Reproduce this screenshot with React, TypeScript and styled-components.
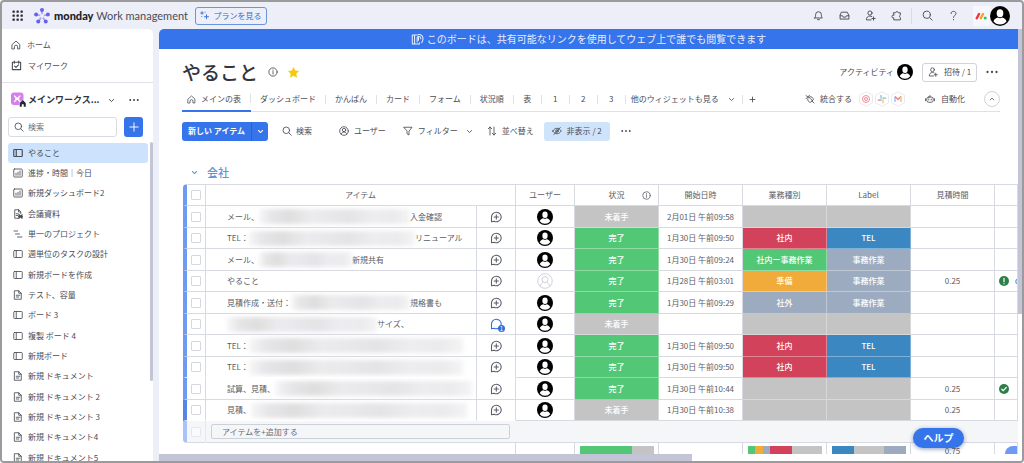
import React from "react";
import styled, { createGlobalStyle, css } from "styled-components";

const GlobalStyle = createGlobalStyle`
  *, *::before, *::after { box-sizing: border-box; }
  body { margin: 0; background: #fff; }
  body, button, input {
    font-family: "Noto Sans CJK JP", sans-serif;
    font-size: 8px;
    line-height: 12px;
    color: #4a4c55;
  }
  button { border: 0; background: none; padding: 0; cursor: pointer; white-space: nowrap; }
  a { color: inherit; text-decoration: none; white-space: nowrap; }
  svg { display: block; flex: none; }
`;

const colors = {
  blue: "#3574ea",
  bar: "#6d9af3",
  line: "#d8dae2",
  scroll: "#c3c5d6",
  chrome: "#eceef8",
  green: "#52c876",
  gray: "#c4c4c4",
  red: "#d2435b",
  orange: "#f1ab3b",
  slate: "#9cabbf",
  sky: "#3a87c2",
};

/* ---------- icons ---------- */

const shapes: Record<string, React.ReactNode> = {
  home: <path d="M2.500 8.800 10 2.200l7.500 6.600v9h-4.300v-4.300a3.200 3.200 0 0 0-6.400 0v4.300H2.500z" />,
  calendar: <><path d="M2.500 4h15v13.500h-15zM6 1.800v4M14 1.800v4" /><path d="m6.500 11 2.600 2.400 4.600-4.600" /></>,
  search: <><circle cx="8.600" cy="8.600" r="6.600" /><path d="m13.500 13.500 5 5" /></>,
  plus: <path d="M10 3v14M3 10h14" />,
  down: <path d="m4 7 6 6 6-6" />,
  up: <path d="m4 13 6-6 6 6" />,
  board: <><rect x="1.500" y="3" width="17" height="14" rx="1.500" /><path d="M6.500 3v14" /></>,
  chart: <><rect x="1.500" y="2" width="17" height="16" rx="1.500" /><path d="M6 14.500v-4M10 14.500v-6M14 14.500V6" /></>,
  doc: <><path d="M3.500 1.500h8l5 5v12h-13zM11.500 1.500v5h5" /><path d="M6.500 10.500h7M6.500 14h5" /></>,
  docLocked: <><path d="M11 18.500H3.500v-17h8l4 4V9M11 1.500V6h4" /><path d="M6.500 9.500h4M6.500 13h3" /><path d="M12 11.500 18 18M18 12l-6 6M11.500 15h7" strokeWidth="3" /></>,
  gantt: <path d="M2 4h7M5 10h8M9 16h9" />,
  info: <><circle cx="10" cy="10" r="8.300" /><path d="M10 9v5M10 5.800v.8" /></>,
  bell: <path d="M3 14.500h14c-1.300-1.200-1.700-2.800-1.700-6a5.300 5.300 0 0 0-10.600 0c0 3.200-.4 4.800-1.700 6zM8.300 17.500h3.400" />,
  inbox: <path d="M5 4h10l3 6v6.500H2V10zM2 10.500h4.500l1.200 2.500h4.600l1.200-2.500H18" />,
  invite: <><circle cx="9" cy="5.500" r="3.800" /><path d="M11 18H2.500c0-4.500 2.500-7 6.500-7 1.300 0 2.400.3 3.300.8" /><path d="M15.500 12.500v6M12.500 15.500h6" /></>,
  puzzle: <path d="M5 5h3.200a2.600 2.600 0 0 1 5.100 0H17v4.200a2.500 2.500 0 0 0 0 4.600V18H5v-3.800a2.600 2.600 0 1 1 0-5z" />,
  question: <path d="M5.500 6.500c0-2.600 1.900-4 4.500-4s4.500 1.500 4.500 3.900c0 3.100-4.500 3.300-4.500 7M10 17v.8" />,
  person: <><circle cx="10" cy="10" r="8.600" /><circle cx="10" cy="8" r="3.400" /><path d="M4.500 16.300c.8-2.800 2.800-4.300 5.500-4.300s4.700 1.500 5.500 4.300" /></>,
  filter: <path d="M2 2.500h16l-6 8V18l-4-2.500v-5z" />,
  sort: <path d="M6 18V2M2.500 5.500 6 2l3.500 3.500M14 2v16M10.500 14.500 14 18l3.500-3.500" />,
  hidden: <><path d="M1.500 10C4 6.300 7 4.500 10 4.500s6 1.800 8.500 5.500c-2.500 3.700-5.500 5.500-8.500 5.500S4 13.700 1.500 10z" /><circle cx="10" cy="10" r="2.600" /><path d="M4 17 16.500 3" /></>,
  plug: <path d="m2 3 5 4M2 9.500 9 2.500M7 5.500l8 8M5.500 9.500a5.500 5.500 0 0 0 6 7l5-5a5.500 5.500 0 0 0-7-6M14 14l4 4" />,
  robot: <><rect x="3.500" y="6" width="13" height="10.500" rx="4" /><path d="M1 9.500v4M19 9.500v4M10 6V3M7.500 10v2M12.500 10v2" /></>,
  chat: <><path d="M10.500 2a8 8 0 1 1-3.600 15.100L2.500 18V10a8 8 0 0 1 8-8z" /><path d="M10.500 6.500v7M7 10h7" /></>,
  chatOpen: <path d="M10.500 2a8 8 0 1 1-3.600 15.100L2.500 18V10a8 8 0 0 1 8-8z" />,
  share: <><path d="M10 3H2v14h11v-2M5.500 3v14" /><path d="M9.500 14V7.500c0-1.500 2-1.500 2 0V11M11 5.500c2.500-.6 4 1 4 3.500M11.500 2.500c4.500-.5 7 2.500 7 6.500 0 3-1.500 4.500-2 6" /></>,
};

const Icon = ({ name, size = 10, w = 1.7, color = "currentColor" }: { name: string; size?: number; w?: number; color?: string }) => (
  <svg width={size} height={size} viewBox="0 0 20 20" fill="none" stroke={color} strokeWidth={w} strokeLinecap="round" strokeLinejoin="round" aria-hidden="true">
    {shapes[name]}
  </svg>
);

const Dots = ({ size = 10 }: { size?: number }) => (
  <svg width={size} height={size} viewBox="0 0 20 20" fill="currentColor" aria-hidden="true">
    <circle cx="2.500" cy="10" r="1.900" /><circle cx="10" cy="10" r="1.900" /><circle cx="17.500" cy="10" r="1.900" />
  </svg>
);

const Avatar = ({ size = 16 }: { size?: number }) => (
  <svg width={size} height={size} viewBox="0 0 32 32" aria-hidden="true">
    <circle cx="16" cy="16" r="16" fill="#000" />
    <path d="M5.500 24.500c1.300-3.800 4-5.500 7.200-6.200 2 1.700 4.600 1.700 6.600 0 3.200.7 5.900 2.400 7.200 6.200A13.500 13.500 0 0 1 16 29.600a13.500 13.500 0 0 1-10.500-5.100z" fill="#fff" />
    <ellipse cx="16" cy="11.500" rx="5.300" ry="6.500" fill="#fff" />
  </svg>
);

const EmptyAvatar = () => (
  <svg width="16" height="16" viewBox="0 0 32 32" fill="none" stroke="#d0d2da" strokeWidth="2" aria-hidden="true">
    <circle cx="16" cy="16" r="14.500" />
    <circle cx="16" cy="13" r="6" />
    <path d="M6.500 26c1-4 3.500-6 6-7M25.500 26c-1-4-3.500-6-6-7" />
  </svg>
);

const AppGrid = () => (
  <svg width="11" height="11" viewBox="0 0 11 11" fill="#26282f" aria-hidden="true">
    {[1, 5, 9].map((y) => [1, 5, 9].map((x) => <rect key={`${x}-${y}`} x={x - 0.500} y={y - 0.500} width="2.300" height="2.300" rx="0.600" />))}
  </svg>
);

const WorkLogo = () => (
  <svg width="16" height="16" viewBox="0 0 32 32" aria-hidden="true">
    <g stroke="#a9a4f5" strokeWidth="3.500">
      <path d="M16 16V4M16 16 4 13M16 16l12-3M16 16 9 27M16 16l7 11" />
    </g>
    <circle cx="16" cy="16" r="4" fill="#eceef8" />
    <g fill="#6a5ff0">
      <circle cx="16" cy="4.200" r="4" /><circle cx="4.200" cy="13" r="4" /><circle cx="27.800" cy="13" r="4" />
      <circle cx="8.500" cy="27" r="4" /><circle cx="23.500" cy="27" r="4" />
    </g>
  </svg>
);

const MondayMark = () => (
  <svg width="12" height="8" viewBox="0 0 24 16" aria-hidden="true">
    <g strokeWidth="5" strokeLinecap="round">
      <path d="M3.500 12.500 8 4" stroke="#f0334f" /><path d="M11.500 12.500 16 4" stroke="#f8a51b" />
    </g>
    <circle cx="20.500" cy="12" r="3" fill="#1fc875" />
  </svg>
);

const Sparkle = () => (
  <svg width="9" height="9" viewBox="0 0 18 18" stroke="#3f74d0" strokeWidth="2" strokeLinecap="round" aria-hidden="true">
    <path d="M4 1.500v5M1.500 4h5M13 7.500v8M9 11.500h8M10 2.500h.1M3.500 11h.1" />
  </svg>
);

const WorkspaceBadge = () => (
  <svg width="16" height="16" viewBox="0 0 32 32" aria-hidden="true">
    <rect x="0" y="1" width="25" height="25" rx="6" fill="#d57fe8" />
    <path d="m7 8 11 11M18 8 7 19M9 13.500h7" stroke="#fff" strokeWidth="2.500" strokeLinecap="round" />
    <path d="M17 30v-8l6.500-6.500L30 22v8h-5v-5h-3v5z" fill="#26282f" stroke="#fff" strokeWidth="1" />
  </svg>
);

const Star = () => (
  <svg width="11" height="11" viewBox="0 0 20 20" aria-hidden="true">
    <path d="m10 1 2.800 5.900 6.400.8-4.700 4.500 1.200 6.400L10 15.500l-5.700 3.100 1.200-6.400L.8 7.700l6.400-.8z" fill="#f8c80a" stroke="#f8c80a" strokeLinejoin="round" />
  </svg>
);

const Hexagon = ({ children }: { children: React.ReactNode }) => (
  <svg width="16" height="16" viewBox="0 0 32 32" fill="none" aria-hidden="true">
    <path d="M16 1.500 29 8.500v15L16 30.500 3 23.500v-15z" fill="#fff" stroke="#e3e5ea" strokeWidth="1.600" strokeLinejoin="round" />
    {children}
  </svg>
);

/* ---------- frame and top bar ---------- */

const Frame = styled.div`
  height: 100vh;
  display: flex;
  flex-direction: column;
  overflow: hidden;
  background: ${colors.chrome};
  border: 2px solid #9b9b9d;
  border-radius: 4px;
`;

const TopBar = styled.header`
  flex: none;
  height: 27px;
  display: flex;
  align-items: center;
  justify-content: space-between;
  padding: 0 12px 0 9px;
`;

const Brand = styled.div`
  display: flex;
  align-items: center;
`;

const BrandLink = styled.a`
  display: flex;
  align-items: center;
  gap: 4px;
  margin: 0 7px 0 11px;
  font: 400 11px/16px Lato, sans-serif;
  color: #4a4c55;
  b { font-weight: 900; color: #202228; }
`;

const PlanButton = styled.button`
  display: flex;
  align-items: center;
  justify-content: center;
  gap: 4px;
  width: 72px;
  height: 18px;
  border: 1px solid #6d94da;
  border-radius: 3px;
  color: #3f6fc4;
`;

const TopActions = styled.nav`
  display: flex;
  align-items: center;
  gap: 14px;
`;

const IconButton = styled.button`
  display: flex;
  align-items: center;
  justify-content: center;
  width: 12px;
  height: 12px;
`;

const TopDivider = styled.span`
  width: 1px;
  height: 16px;
  margin: 0 -5px;
  background: #d9dce8;
`;

const Account = styled.button`
  display: flex;
  align-items: center;
  gap: 3px;
  padding-left: 2px;
  background: linear-gradient(90deg, #f6f7fc 18px, transparent 18px);
`;

/* ---------- sidebar ---------- */

const Body = styled.div`
  flex: 1;
  min-height: 0;
  display: flex;
  gap: 6px;
`;

const Sidebar = styled.aside`
  flex: none;
  width: 151px;
  display: flex;
  flex-direction: column;
  background: #fff;
  border-top-right-radius: 5px;
`;

const MainLinks = styled.nav`
  height: 54px;
  padding: 5px 9px;
  border-bottom: 1px solid #dfe1e8;
`;

const MainLink = styled.a`
  display: flex;
  align-items: center;
  gap: 6px;
  height: 21px;
`;

const Workspace = styled.div`
  display: flex;
  align-items: center;
  gap: 1px;
  height: 34px;
  padding: 0 14px 0 9px;
  font-weight: 700;
  font-size: 9px;
  color: #33353c;
`;

const WorkspaceName = styled.span`
  flex: 1;
  white-space: nowrap;
`;

const WorkspaceActions = styled.span`
  display: flex;
  align-items: center;
  gap: 14px;
`;

const SearchRow = styled.div`
  display: flex;
  gap: 7px;
  padding: 0 10px 5px 6px;
`;

const SearchBox = styled.label`
  flex: 1;
  min-width: 0;
  display: flex;
  align-items: center;
  gap: 4px;
  height: 20px;
  padding: 0 5px;
  border: 1px solid #dadce4;
  border-radius: 3px;
`;

const SearchInput = styled.input`
  flex: 1;
  min-width: 0;
  border: 0;
  padding: 0;
  background: none;
  &::placeholder { color: #6d707a; opacity: 1; }
`;

const AddButton = styled.button`
  flex: none;
  display: flex;
  align-items: center;
  justify-content: center;
  width: 19px;
  height: 20px;
  border-radius: 3px;
  background: ${colors.blue};
  color: #fff;
`;

const BoardArea = styled.div`
  flex: 1;
  min-height: 0;
  display: flex;
`;

const BoardList = styled.ul`
  flex: 1;
  margin: 0;
  padding: 1px 2px 0 6px;
  list-style: none;
  overflow: hidden;
`;

const BoardItem = styled.li`
  height: 20px;
  &:nth-child(3n) { height: 21px; }
`;

const BoardLink = styled.a<{ $active?: boolean }>`
  display: flex;
  align-items: center;
  gap: 5px;
  height: 20px;
  padding-left: 5px;
  border-radius: 3px;
  background: ${(p) => (p.$active ? "#cde3fd" : "transparent")};
`;

const SideThumb = styled.div`
  width: 3px;
  height: 75%;
  border-radius: 2px;
  background: ${colors.scroll};
`;

/* ---------- board ---------- */

const Main = styled.main`
  position: relative;
  flex: 1;
  min-width: 0;
  display: flex;
`;

const Panel = styled.div`
  flex: 1;
  min-width: 0;
  display: flex;
  flex-direction: column;
  overflow: hidden;
  background: #fff;
  border-top-left-radius: 5px;
`;

const MainThumb = styled.div`
  height: 66%;
  background: ${colors.scroll};
`;

const ThumbTrack = styled.div`
  flex: none;
  width: 4px;
  background: #fff;
`;

const BottomTrack = styled.div`
  flex: none;
  height: 7px;
  background: #fff;
`;

const BottomThumb = styled.div`
  width: 62%;
  height: 7px;
  background: ${colors.scroll};
`;

const Banner = styled.div`
  flex: none;
  display: flex;
  align-items: center;
  justify-content: center;
  gap: 3px;
  height: 20px;
  background: ${colors.blue};
  color: #e6eeff;
  font-size: 10px;
`;

const Content = styled.div`
  flex: 1;
  min-height: 0;
  padding-left: 23px;
  overflow: hidden;
`;

const TitleRow = styled.div`
  display: flex;
  align-items: center;
  justify-content: space-between;
  height: 38px;
  padding: 8px 20px 0 0;
`;

const Cluster = styled.div<{ $gap: number }>`
  display: flex;
  align-items: center;
  gap: ${(p) => p.$gap}px;
`;

const Title = styled.h1`
  margin: 0;
  font-size: 19px;
  line-height: 28px;
  font-weight: 500;
  color: #33353c;
`;

const InviteButton = styled.button`
  display: flex;
  align-items: center;
  justify-content: center;
  gap: 6px;
  width: 55px;
  height: 19px;
  border: 1px solid #d0d3dc;
  border-radius: 3px;
`;

const TabRow = styled.div`
  display: flex;
  align-items: center;
  justify-content: space-between;
  height: 25px;
  margin-right: 18px;
  border-bottom: 1px solid #dfe1e8;
`;

const Tabs = styled.nav`
  display: flex;
  height: 25px;
`;

const Tab = styled.a<{ $active?: boolean }>`
  display: flex;
  align-items: center;
  justify-content: center;
  gap: 5px;
  min-width: 28px;
  padding: 0 10px 0 9px;
  background: linear-gradient(#dfe1e8, #dfe1e8) right center / 1px 9px no-repeat;
  ${(p) => p.$active && css`
    padding: 2px 10px 0 5px;
    border-bottom: 2px solid ${colors.blue};
  `}
`;

const MoreTab = styled.button`
  display: flex;
  align-items: center;
  gap: 9px;
  padding: 0 8px 0 5px;
  background: linear-gradient(#dfe1e8, #dfe1e8) right center / 1px 9px no-repeat;
`;

const AddTab = styled.button`
  padding: 0 6px;
`;

const TextButton = styled.button<{ $gap?: number }>`
  display: flex;
  align-items: center;
  gap: ${(p) => p.$gap ?? 5}px;
`;

const RoundButton = styled.button`
  display: flex;
  align-items: center;
  justify-content: center;
  width: 16px;
  height: 16px;
  border: 1px solid #d0d3dc;
  border-radius: 50%;
`;

const Toolbar = styled.div`
  display: flex;
  align-items: center;
  gap: 14px;
  height: 38px;
`;

const SplitButton = styled.div`
  display: flex;
  width: 86px;
  height: 19px;
  border-radius: 3px;
  overflow: hidden;
  background: ${colors.blue};
`;

const NewItem = styled.button`
  flex: 1;
  color: #fff;
  font-weight: 700;
`;

const NewItemMenu = styled.button`
  display: flex;
  align-items: center;
  justify-content: center;
  width: 17px;
  border-left: 1px solid #2c62c8;
  color: #fff;
`;

const HiddenButton = styled.button`
  display: flex;
  align-items: center;
  justify-content: center;
  gap: 5px;
  width: 66px;
  height: 19px;
  margin: 0 -4px;
  border-radius: 3px;
  background: #cfe3fb;
`;

const GroupTitle = styled.h2`
  display: flex;
  align-items: center;
  gap: 9px;
  height: 24px;
  margin: 10px 0 0 9px;
  font-size: 11px;
  line-height: 16px;
  font-weight: 500;
  color: #5f93da;
`;

/* ---------- table ---------- */

const Table = styled.table`
  width: calc(100% - 1px);
  margin-left: 1px;
  table-layout: fixed;
  border-collapse: separate;
  border-spacing: 0;
  color: #5a5c65;
`;

const HeadCell = styled.th`
  height: 22px;
  padding: 0;
  font-weight: 400;
  text-align: center;
  white-space: nowrap;
  overflow: hidden;
  border: solid ${colors.line};
  border-width: 1px 1px 1px 0;
`;

const InfoLabel = styled.span`
  display: grid;
  grid-template-columns: 1fr auto 1fr;
  align-items: center;
  padding: 0 7px;
  svg { justify-self: end; }
`;

const Row = styled.tr`
  td { height: 22px; }
  &:nth-child(even) td { height: 21px; }
`;

const Cell = styled.td<{ $open?: boolean }>`
  padding: 0;
  text-align: center;
  white-space: nowrap;
  overflow: hidden;
  border: solid ${colors.line};
  border-width: 0 1px 1px 0;
  ${(p) => p.$open && css`border-bottom-color: transparent;`}
  > svg { margin: 0 auto; }
`;

const checkEdge = css<{ $bar?: string }>`
  border-left: 4px solid ${(p) => p.$bar ?? colors.bar};
`;

const CheckHead = styled(HeadCell)<{ $bar?: string }>`
  ${checkEdge}
  border-top-left-radius: 4px;
`;

const CheckCell = styled(Cell)<{ $bar?: string }>`
  ${checkEdge}
`;

const Check = styled.input.attrs({ type: "checkbox" })`
  appearance: none;
  display: block;
  width: 10px;
  height: 10px;
  margin: 0 auto;
  border: 1px solid #d5d8e0;
  border-radius: 1px;
  background: #fff;
`;

const ItemLine = styled.div`
  display: flex;
  align-items: center;
  padding-left: 21px;
`;

const HiddenSpan = styled.span<{ $width: number }>`
  display: flex;
  align-items: center;
  width: ${(p) => p.$width}px;
  flex: none;
`;

const Redaction = styled.span`
  flex: 1;
  height: 15px;
  filter: blur(2px);
  background: linear-gradient(90deg, #f6f6f7, #e6e6e9 8%, #dededf 20%, #ebebed 34%, #e9e9ec 45%, #e4e4e7 60%, #ededef 75%, #ebebed 90%, #f4f4f5);
`;

const ChatButton = styled.button`
  position: relative;
  display: block;
  margin: 0 auto;
  color: #5c5f69;
`;

const Count = styled.span`
  position: absolute;
  right: -3px;
  bottom: -2px;
  width: 7px;
  height: 7px;
  border-radius: 50%;
  background: #2f6fdc;
  color: #fff;
  font-size: 6px;
  line-height: 7px;
  text-align: center;
`;

const LabelCell = styled(Cell)<{ $tone: string }>`
  background: ${(p) => p.$tone};
  border-color: rgba(255, 255, 255, 0.35);
  color: #fff;
  font-weight: 500;
`;

const Mark = styled.div`
  display: flex;
  align-items: center;
  gap: 6px;
  padding-left: 4px;
`;

const AddCell = styled.td<{ $bar?: string }>`
  height: 22px;
  padding: 0;
  background: #f5f6f8;
  border-bottom: 1px solid ${colors.line};
  ${(p) => p.$bar && css`
    border-left: 4px solid ${p.$bar};
    border-right: 1px solid #e6e8ed;
    border-bottom-left-radius: 4px;
    ${Check} { border-color: #e6e8ed; background: #f8fafc; }
  `}
`;

const AddInput = styled.input`
  display: block;
  width: calc(100% - 11px);
  height: 15px;
  margin-left: 5px;
  padding: 0 10px;
  border: 1px solid #ccd0d9;
  border-radius: 2px;
  background: transparent;
  &::placeholder { color: #6b6e78; opacity: 1; }
`;

const SummaryCell = styled.td`
  height: 18px;
  padding: 3px 4px 0;
  vertical-align: top;
  text-align: center;
  line-height: 9px;
  border-right: 1px solid ${colors.line};
  &:first-child { border-right: 0; }
`;

const Battery = styled.div`
  display: flex;
  height: 14px;
  margin-left: 1px;
`;

const Segment = styled.span<{ $tone: string; $share: number }>`
  flex: ${(p) => p.$share} 0 0;
  background: ${(p) => p.$tone};
`;

const SummaryTab = styled.div`
  height: 14px;
  margin: 0 -4px 0 6px;
  border-top-left-radius: 8px;
  background: ${colors.bar};
`;

const HelpButton = styled.button`
  position: absolute;
  right: 58px;
  bottom: 13px;
  width: 51px;
  height: 20px;
  border-radius: 10px;
  background: ${colors.blue};
  box-shadow: 0 1px 4px rgba(30, 60, 130, 0.5);
  color: #fff;
  font-size: 10px;
  font-weight: 700;
`;

/* ---------- data ---------- */

const boards: [string, string][] = [
  ["board", "やること"],
  ["chart", "進捗・時間｜今日"],
  ["chart", "新規ダッシュボード2"],
  ["docLocked", "会議資料"],
  ["gantt", "単一のプロジェクト"],
  ["board", "週単位のタスクの設計"],
  ["board", "新規ボードを作成"],
  ["doc", "テスト、容量"],
  ["board", "ボード 3"],
  ["board", "複製 ボード 4"],
  ["board", "新規ボード"],
  ["doc", "新規 ドキュメント"],
  ["doc", "新規 ドキュメント 2"],
  ["doc", "新規 ドキュメント 3"],
  ["doc", "新規 ドキュメント4"],
  ["doc", "新規 ドキュメント5"],
];

const tabs = ["ダッシュボード", "かんばん", "カード", "フォーム", "状況順", "表", "1", "2", "3"];

const tones: Record<string, string> = {
  "完了": colors.green,
  "未着手": colors.gray,
  "社内": colors.red,
  "社内ー事務作業": colors.green,
  "準備": colors.orange,
  "社外": colors.slate,
  "TEL": colors.sky,
  "事務作業": colors.slate,
  "": colors.gray,
};

type Item = {
  lead: string; hide?: number; tail?: string; status: string; date?: string;
  kind: string; label: string; hours?: string; mark?: "alert" | "done"; unread?: boolean; open?: boolean; noUser?: boolean;
};

const items: Item[] = [
  { lead: "メール、", hide: 183, tail: "入金確認", status: "未着手", date: "2月01日 午前09:58", kind: "", label: "" },
  { lead: "TEL：", hide: 188, tail: "リニューアル", status: "完了", date: "1月30日 午前09:50", kind: "社内", label: "TEL" },
  { lead: "メール、", hide: 125, tail: "新規共有", status: "完了", date: "1月30日 午前09:24", kind: "社内ー事務作業", label: "事務作業" },
  { lead: "やること", status: "完了", date: "1月28日 午前03:01", kind: "準備", label: "事務作業", hours: "0.25", mark: "alert", noUser: true },
  { lead: "見積作成・送付：", hide: 183, tail: "規格書も", status: "完了", date: "1月30日 午前09:29", kind: "社外", label: "事務作業" },
  { lead: "", hide: 150, tail: "サイズ、", status: "未着手", kind: "", label: "", unread: true },
  { lead: "TEL：", hide: 236, status: "完了", date: "1月30日 午前09:50", kind: "社内", label: "TEL" },
  { lead: "TEL：", hide: 236, status: "完了", date: "1月30日 午前09:50", kind: "社内", label: "TEL", open: true },
  { lead: "試算、見積、", hide: 245, status: "完了", date: "1月30日 午前10:44", kind: "", label: "", hours: "0.25", mark: "done" },
  { lead: "見積、", hide: 240, status: "未着手", date: "1月30日 午前10:38", kind: "", label: "", hours: "0.25", open: true },
];

const StateMark = ({ kind }: { kind: "alert" | "done" }) => (
  <svg width="10" height="10" viewBox="0 0 20 20" aria-hidden="true">
    <circle cx="10" cy="10" r="10" fill="#2c7f49" />
    <path d={kind === "alert" ? "M10 4.500v7M10 15v.3" : "m5.500 10.500 3 3 6-6.500"} fill="none" stroke="#fff" strokeWidth="2.400" strokeLinecap="round" />
  </svg>
);

const ItemRow = ({ item, bar }: { item: Item; bar?: string }) => (
  <Row>
    <CheckCell $bar={bar} $open={item.open}><Check aria-label={`${item.lead}を選択`} /></CheckCell>
    <Cell $open={item.open}>
      <ItemLine>
        {item.hide ? <HiddenSpan $width={item.hide}>{item.lead}<Redaction /></HiddenSpan> : item.lead}
        {item.tail}
      </ItemLine>
    </Cell>
    <Cell $open={item.open}>
      <ChatButton aria-label="更新">
        <Icon name={item.unread ? "chatOpen" : "chat"} size={12} w={1.8} color={item.unread ? "#2f6fdc" : undefined} />
        {item.unread && <Count>1</Count>}
      </ChatButton>
    </Cell>
    <Cell>{item.noUser ? <EmptyAvatar /> : <Avatar />}</Cell>
    <LabelCell $tone={tones[item.status]}>{item.status}</LabelCell>
    <Cell>{item.date}</Cell>
    <LabelCell $tone={tones[item.kind]}>{item.kind}</LabelCell>
    <LabelCell $tone={tones[item.label]}>{item.label}</LabelCell>
    <Cell>{item.hours}</Cell>
    <Cell>{item.mark && <Mark><StateMark kind={item.mark} />{item.mark === "alert" && "q"}</Mark>}</Cell>
  </Row>
);

const ItemTable = () => (
  <Table>
    <colgroup>
      <col width="23" /><col /><col width="39" /><col width="59" />
      <col width="84" /><col width="84" /><col width="84" />
      <col width="84" /><col width="84" /><col width="23" />
    </colgroup>
    <thead>
      <tr>
        <CheckHead><Check aria-label="すべて選択" /></CheckHead>
        <HeadCell colSpan={2}>アイテム</HeadCell>
        <HeadCell>ユーザー</HeadCell>
        <HeadCell><InfoLabel><i /><span>状況</span><Icon name="info" size={9} /></InfoLabel></HeadCell>
        <HeadCell>開始日時</HeadCell>
        <HeadCell>業務種別</HeadCell>
        <HeadCell>Label</HeadCell>
        <HeadCell>見積時間</HeadCell>
        <HeadCell />
      </tr>
    </thead>
    <tbody>
      {items.map((item, i) => <ItemRow key={i} item={item} bar={i === 9 ? "#5585e6" : undefined} />)}
    </tbody>
    <tfoot>
      <tr>
        <AddCell $bar="#a9c3fa"><Check aria-label="新しい行を選択" disabled /></AddCell>
        <AddCell colSpan={2}><AddInput placeholder="アイテムを+追加する" aria-label="アイテムを追加" /></AddCell>
        <AddCell colSpan={7} />
      </tr>
      <tr>
        <SummaryCell />
        <SummaryCell colSpan={2} />
        <SummaryCell />
        <SummaryCell><Battery><Segment $tone={colors.green} $share={70} /><Segment $tone={colors.gray} $share={30} /></Battery></SummaryCell>
        <SummaryCell />
        <SummaryCell>
          <Battery>
            <Segment $tone={colors.green} $share={10} /><Segment $tone={colors.orange} $share={10} />
            <Segment $tone={colors.slate} $share={10} /><Segment $tone={colors.red} $share={30} />
            <Segment $tone={colors.gray} $share={40} />
          </Battery>
        </SummaryCell>
        <SummaryCell>
          <Battery>
            <Segment $tone={colors.sky} $share={30} /><Segment $tone={colors.gray} $share={40} />
            <Segment $tone={colors.slate} $share={30} />
          </Battery>
        </SummaryCell>
        <SummaryCell>0.75</SummaryCell>
        <SummaryCell><SummaryTab /></SummaryCell>
      </tr>
    </tfoot>
  </Table>
);

export default function App() {
  return (
    <Frame>
      <GlobalStyle />
      <TopBar>
        <Brand>
          <IconButton aria-label="製品メニュー"><AppGrid /></IconButton>
          <BrandLink href="#"><WorkLogo /><span><b>monday</b> Work management</span></BrandLink>
          <PlanButton><Sparkle />プランを見る</PlanButton>
        </Brand>
        <TopActions>
          <IconButton aria-label="通知"><Icon name="bell" size={11} /></IconButton>
          <IconButton aria-label="受信箱"><Icon name="inbox" size={11} /></IconButton>
          <IconButton aria-label="メンバーを招待"><Icon name="invite" size={11} /></IconButton>
          <IconButton aria-label="アプリ"><Icon name="puzzle" size={11} /></IconButton>
          <TopDivider />
          <IconButton aria-label="検索"><Icon name="search" size={11} /></IconButton>
          <IconButton aria-label="ヘルプ"><Icon name="question" size={11} /></IconButton>
          <Account aria-label="アカウント"><MondayMark /><Avatar size={20} /></Account>
        </TopActions>
      </TopBar>
      <Body>
        <Sidebar>
          <MainLinks>
            <MainLink href="#"><Icon name="home" />ホーム</MainLink>
            <MainLink href="#"><Icon name="calendar" size={11} w={2} />マイワーク</MainLink>
          </MainLinks>
          <Workspace>
            <WorkspaceBadge />
            <WorkspaceName>メインワークス...</WorkspaceName>
            <WorkspaceActions><Icon name="down" size={7} w={2.5} /><Dots /></WorkspaceActions>
          </Workspace>
          <SearchRow>
            <SearchBox>
              <Icon name="search" />
              <SearchInput placeholder="検索" aria-label="検索" />
            </SearchBox>
            <AddButton aria-label="追加"><Icon name="plus" size={12} w={1.6} /></AddButton>
          </SearchRow>
          <BoardArea>
            <BoardList>
              {boards.map(([icon, name], i) => (
                <BoardItem key={name}>
                  <BoardLink href="#" $active={i === 0}><Icon name={icon} w={i === 0 ? 2.4 : 1.7} />{name}</BoardLink>
                </BoardItem>
              ))}
            </BoardList>
            <SideThumb />
          </BoardArea>
        </Sidebar>
        <Main>
          <Panel>
            <Banner><Icon name="share" size={13} w={1.6} />このボードは、共有可能なリンクを使用してウェブ上で誰でも閲覧できます</Banner>
            <Content>
              <TitleRow>
                <Cluster $gap={10}>
                  <Title>やること</Title>
                  <Icon name="info" />
                  <Star />
                </Cluster>
                <Cluster $gap={9}>
                  <TextButton $gap={3}>アクティビティ<Avatar /></TextButton>
                  <InviteButton><Icon name="invite" />招待 / 1</InviteButton>
                  <IconButton aria-label="その他"><Dots size={12} /></IconButton>
                </Cluster>
              </TitleRow>
              <TabRow>
                <Tabs>
                  <Tab href="#" $active><Icon name="home" size={9} />メインの表</Tab>
                  {tabs.map((name) => <Tab key={name} href="#">{name}</Tab>)}
                  <MoreTab>他のウィジェットも見る<Icon name="down" size={7} w={2.5} /></MoreTab>
                  <AddTab aria-label="ビューを追加"><Icon name="plus" size={7} w={2.5} /></AddTab>
                </Tabs>
                <Cluster $gap={19}>
                  <Cluster $gap={6}>
                    <TextButton><Icon name="plug" />統合する</TextButton>
                    <Cluster $gap={0}>
                      <Hexagon><circle cx="16" cy="16" r="7" stroke="#f08c9b" strokeWidth="2" /><circle cx="16" cy="16" r="3" stroke="#f08c9b" strokeWidth="2" /></Hexagon>
                      <Hexagon>
                        <g strokeWidth="3.500" strokeLinecap="round">
                          <path d="M14 9v5" stroke="#a3d3ec" /><path d="M18 14h5" stroke="#a3d6bb" />
                          <path d="M18 18v5" stroke="#efd49a" /><path d="M9 18h5" stroke="#e5a3b7" />
                        </g>
                      </Hexagon>
                      <Hexagon>
                        <g strokeWidth="3">
                          <path d="M10 22V11" stroke="#a3c0f2" /><path d="m10 11 6 6 6-6" stroke="#ee857b" /><path d="M22 11v11" stroke="#f2c28a" />
                        </g>
                      </Hexagon>
                    </Cluster>
                  </Cluster>
                  <TextButton $gap={6}><Icon name="robot" />自動化</TextButton>
                  <RoundButton aria-label="折りたたむ"><Icon name="up" size={6} w={2.8} /></RoundButton>
                </Cluster>
              </TabRow>
              <Toolbar>
                <SplitButton>
                  <NewItem>新しい アイテム</NewItem>
                  <NewItemMenu aria-label="追加メニュー"><Icon name="down" size={7} w={3} /></NewItemMenu>
                </SplitButton>
                <Cluster $gap={17}>
                  <Cluster $gap={27}>
                    <TextButton $gap={4}><Icon name="search" />検索</TextButton>
                    <TextButton><Icon name="person" />ユーザー</TextButton>
                  </Cluster>
                  <Cluster $gap={8}>
                    <TextButton><Icon name="filter" />フィルター</TextButton>
                    <Icon name="down" size={7} w={2.5} />
                  </Cluster>
                </Cluster>
                <TextButton><Icon name="sort" />並べ替え</TextButton>
                <HiddenButton><Icon name="hidden" />非表示 / 2</HiddenButton>
                <IconButton aria-label="その他"><Dots /></IconButton>
              </Toolbar>
              <GroupTitle><Icon name="down" size={7} w={3} />会社</GroupTitle>
              <ItemTable />
            </Content>
            <BottomTrack><BottomThumb /></BottomTrack>
          </Panel>
          <ThumbTrack><MainThumb /></ThumbTrack>
          <HelpButton>ヘルプ</HelpButton>
        </Main>
      </Body>
    </Frame>
  );
}
